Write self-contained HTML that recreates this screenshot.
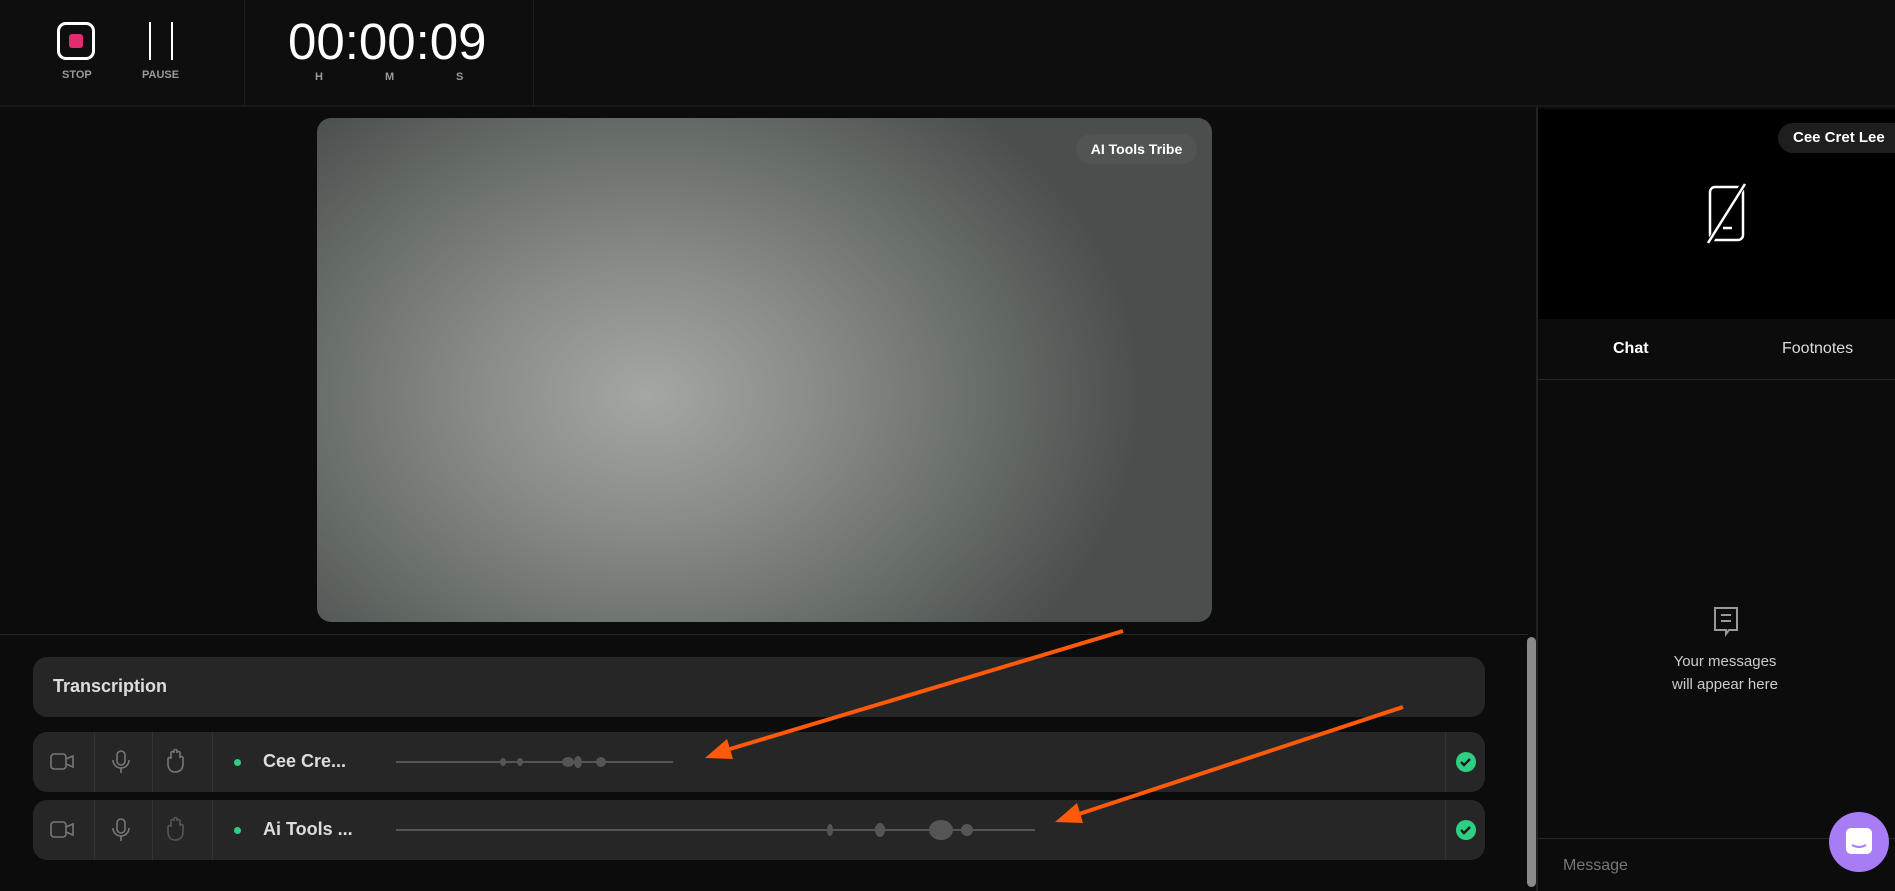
<!DOCTYPE html>
<html><head><meta charset="utf-8"><style>
*{box-sizing:border-box;margin:0;padding:0}
body{width:1895px;height:891px;background:#0c0c0c;font-family:"Liberation Sans",sans-serif;color:#fff;position:relative;overflow:hidden}
.abs{position:absolute}
.lbl{font-size:11px;font-weight:bold;color:#9a9a9a}
.card{position:absolute;left:33px;width:1452px;background:#262626;border-radius:14px}
.row .cell{position:absolute;top:0;height:100%;border-right:1px solid #333}
.name{position:absolute;left:263px;font-size:18px;font-weight:bold;color:#ddd}
.dot{position:absolute;left:234px;width:7px;height:7px;border-radius:50%;background:#2ecf83}
.chk{position:absolute;left:1456px;width:20px;height:20px;border-radius:50%;background:#2ecf83}
</style></head><body>
<div class="abs" style="left:0;top:0;width:1895px;height:107px;background:#0e0e0e;border-bottom:2px solid #181818"></div>
<div class="abs" style="left:244px;top:0;width:1px;height:107px;background:#1e1e1e"></div>
<div class="abs" style="left:533px;top:0;width:1px;height:107px;background:#1e1e1e"></div>
<div class="abs" style="left:57px;top:22px;width:38px;height:38px;border:3px solid #fff;border-radius:9px"></div>
<div class="abs" style="left:69px;top:34px;width:14px;height:14px;background:#e02d6f;border-radius:3px"></div>
<div class="abs lbl" style="left:62px;top:69px">STOP</div>
<div class="abs" style="left:149px;top:22px;width:2px;height:38px;background:#fff"></div>
<div class="abs" style="left:171px;top:22px;width:2px;height:38px;background:#fff"></div>
<div class="abs lbl" style="left:142px;top:69px">PAUSE</div>
<div class="abs" style="left:288px;top:12px;font-size:51px;font-weight:normal;letter-spacing:0px;color:#fff">00:00:09</div>
<div class="abs lbl" style="left:315px;top:71px">H</div>
<div class="abs lbl" style="left:385px;top:71px">M</div>
<div class="abs lbl" style="left:456px;top:71px">S</div>
<div class="abs" style="left:317px;top:118px;width:895px;height:504px;border-radius:14px;background:radial-gradient(ellipse 55% 75% at 37% 55%,#a4a8a2 0%,#878c87 35%,#666c68 70%,#4a4f4d 100%)"></div>
<div class="abs" style="left:1076px;top:134px;width:121px;height:30px;border-radius:15px;background:#505452;font-size:14px;font-weight:bold;line-height:30px;text-align:center">AI Tools Tribe</div>
<div class="abs" style="left:0;top:634px;width:1528px;height:1px;background:#262626"></div>
<div class="card" style="top:657px;height:60px"><div style="position:absolute;left:20px;top:19px;font-size:18px;font-weight:bold;color:#ddd">Transcription</div></div>
<div class="card row" style="top:732px;height:60px">
<div class="cell" style="left:0;width:62px"></div><div class="cell" style="left:62px;width:58px"></div><div class="cell" style="left:120px;width:60px"></div><div class="cell" style="left:1412px;width:0"></div></div>
<div class="card row" style="top:800px;height:60px">
<div class="cell" style="left:0;width:62px"></div><div class="cell" style="left:62px;width:58px"></div><div class="cell" style="left:120px;width:60px"></div><div class="cell" style="left:1412px;width:0"></div></div>
<div class="dot" style="top:759px"></div><div class="name" style="top:751px">Cee Cre...</div>
<div class="dot" style="top:827px"></div><div class="name" style="top:819px">Ai Tools ...</div>
<div class="chk" style="top:752px"></div><div class="chk" style="top:820px"></div>
<div class="abs" style="left:1527px;top:637px;width:9px;height:250px;border-radius:5px;background:#8a8a8a"></div>
<div class="abs" style="left:1536px;top:107px;width:2px;height:784px;background:#222"></div>
<div class="abs" style="left:1538px;top:109px;width:357px;height:210px;background:#000"></div>
<div class="abs" style="left:1778px;top:123px;width:130px;height:30px;border-radius:15px;background:#1e1e1e;font-size:15px;font-weight:bold;line-height:30px;padding-left:15px">Cee Cret Lee</div>
<div class="abs" style="left:1613px;top:340px;font-size:16px;font-weight:bold">Chat</div>
<div class="abs" style="left:1782px;top:340px;font-size:16px;color:#ddd">Footnotes</div>
<div class="abs" style="left:1538px;top:379px;width:357px;height:1px;background:#262626"></div>
<div class="abs" style="left:1625px;top:650px;width:200px;text-align:center;font-size:15px;line-height:23px;color:#ccc">Your messages<br>will appear here</div>
<div class="abs" style="left:1538px;top:838px;width:357px;height:1px;background:#262626"></div>
<div class="abs" style="left:1563px;top:857px;font-size:16px;color:#777">Message</div>
<svg class="abs" style="left:0;top:0" width="1895" height="891" fill="none">
<g stroke="#777" stroke-width="1.6">
<rect x="51" y="754" width="15" height="15" rx="3"/><path d="M66 759l7-3v11l-7-3"/>
<rect x="51" y="822" width="15" height="15" rx="3"/><path d="M66 827l7-3v11l-7-3"/>
<rect x="117" y="751" width="8" height="14" rx="4"/><path d="M113 760a8 8 0 0 0 16 0M121 768v5"/>
<rect x="117" y="819" width="8" height="14" rx="4"/><path d="M113 828a8 8 0 0 0 16 0M121 836v5"/>
<path d="M175 772c-4 0-7-3-7-8v-5c0-2 3-2 3 0v-6c0-2 3-2 3 0v-2c0-2 3-2 3 0v2c0-2 3-2 3 0v5c0-2 3-2 3 0v6c0 5-3 8-8 8z"/>
</g>
<path stroke="#555" stroke-width="1.6" d="M175 840c-4 0-7-3-7-8v-5c0-2 3-2 3 0v-6c0-2 3-2 3 0v-2c0-2 3-2 3 0v2c0-2 3-2 3 0v5c0-2 3-2 3 0v6c0 5-3 8-8 8z"/>
<path stroke="#555" stroke-width="2" d="M396 762H673M396 830H1035"/>
<g fill="#555"><ellipse cx="503" cy="762" rx="3" ry="4"/><ellipse cx="520" cy="762" rx="3" ry="4"/><ellipse cx="568" cy="762" rx="6" ry="5"/><ellipse cx="578" cy="762" rx="4" ry="6"/><ellipse cx="601" cy="762" rx="5" ry="5"/>
<ellipse cx="830" cy="830" rx="3" ry="6"/><ellipse cx="880" cy="830" rx="5" ry="7"/><ellipse cx="941" cy="830" rx="12" ry="10"/><ellipse cx="967" cy="830" rx="6" ry="6"/></g>
<path stroke="#1a1a1a" stroke-width="2.4" d="M1461 762l3 3 6-6M1461 830l3 3 6-6"/>
<g stroke="#ff5a0a" stroke-width="4"><path d="M1123 631L720 752"/><path d="M1403 707L1070 817"/></g>
<g fill="#ff5a0a"><path d="M705 758l22-19 6 20z"/><path d="M1055 822l22-19 6 20z"/></g>
<g stroke="#fff" stroke-width="2.5"><rect x="1710" y="187" width="33" height="53" rx="5"/><path d="M1723 228h9"/></g>
<path stroke="#000" stroke-width="6" d="M1710 242L1743 185"/>
<path stroke="#fff" stroke-width="2.5" d="M1708 243L1745 184"/>
<g stroke="#999" stroke-width="2"><path d="M1715 608h22v22h-8l-3 4v-4h-11z"/><path d="M1721 615h10M1721 621h10"/></g>
</svg>
<div class="abs" style="left:1829px;top:812px;width:60px;height:60px;border-radius:50%;background:#a77cf5"></div>
<div class="abs" style="left:1846px;top:828px;width:26px;height:26px;border-radius:5px;background:#fff"></div>
<svg class="abs" style="left:1846px;top:828px" width="26" height="30" fill="none"><path d="M6 17q7 4 14 0" stroke="#a77cf5" stroke-width="2"/></svg>
</body></html>
